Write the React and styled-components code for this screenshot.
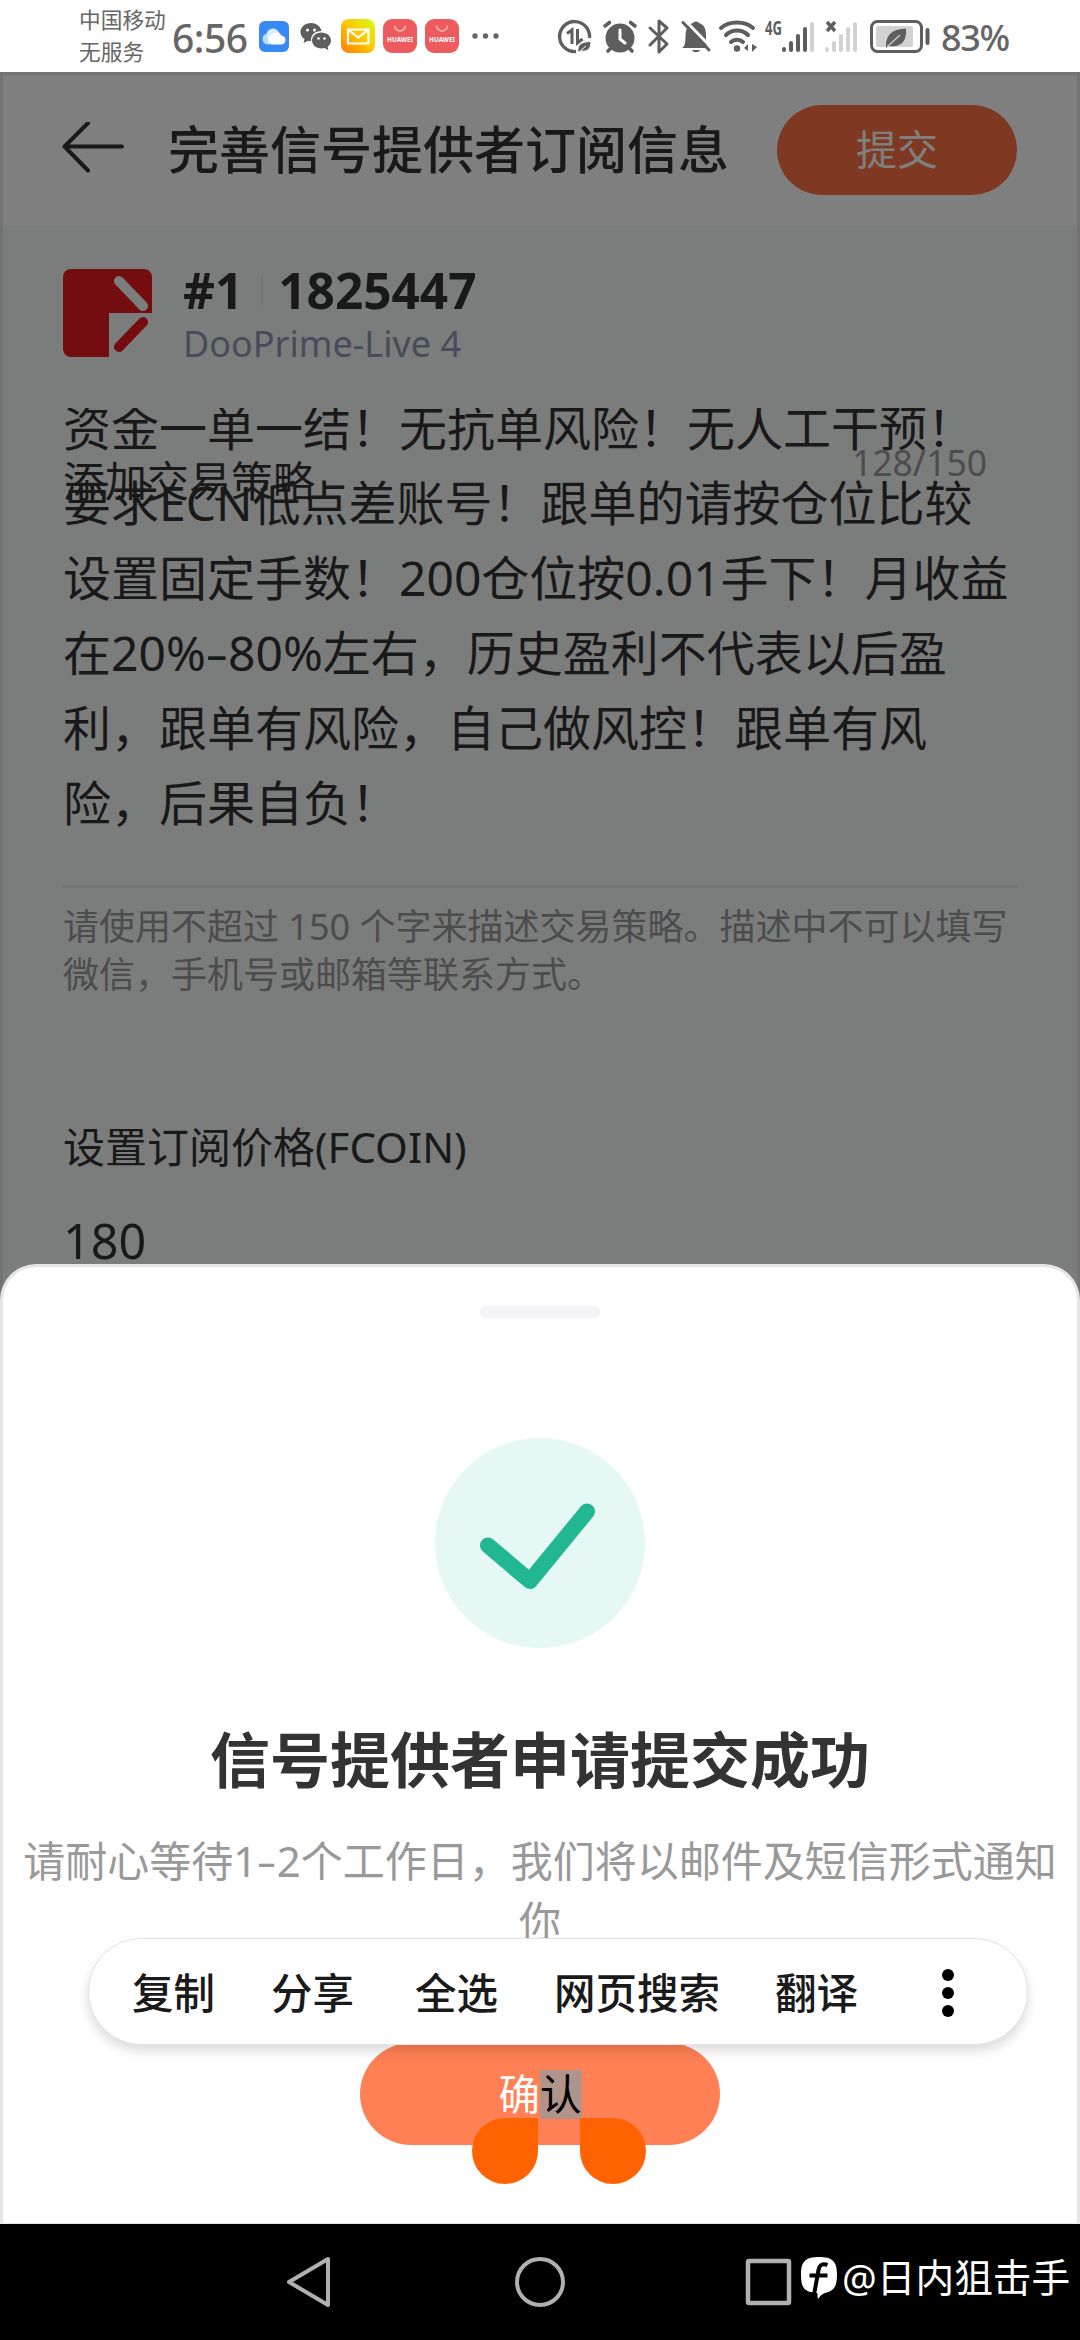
import React from 'react'
import styled, { createGlobalStyle } from 'styled-components'

const GlobalStyle = createGlobalStyle`
  * {
    box-sizing: border-box;
  }
  body {
    margin: 0;
    background: #fff;
    font-family: 'Noto Sans', 'Noto Sans CJK SC', sans-serif;
  }
  svg {
    display: block;
    flex: none;
  }
`

const Screen = styled.div`
  position: relative;
  width: 1080px;
  height: 2340px;
  overflow: hidden;
  display: flex;
  flex-direction: column;
`

const StatusBar = styled.div`
  height: 72px;
  padding-left: 79px;
  display: flex;
  align-items: center;
  color: #666;
  background: #fff;
`

const Carrier = styled.div`
  width: 93px;
  font-size: 21.7px;
  line-height: 32px;
  white-space: nowrap;
`

const Clock = styled.div`
  width: 87px;
  font-size: 39px;
  font-weight: 500;
  line-height: 44px;
  letter-spacing: -0.5px;
  padding-top: 4px;
`

const StatusIcon = styled.svg`
  width: ${props => props.$w}px;
  height: 36px;
  margin-right: ${props => props.$gap || 0}px;
  overflow: visible;
`

const Percent = styled.div`
  font-size: 36px;
  font-weight: 500;
  line-height: 44px;
  letter-spacing: -1.4px;
  padding-top: 3px;
`

const Page = styled.div`
  position: relative;
  height: 2152px;
  border: 3px solid #e6e6e6;
  background: #f7faf9;
`

const Header = styled.header`
  height: 150px;
  padding: 0 60px 0 58px;
  display: flex;
  align-items: center;
  background: #fff;
`

const Title = styled.h1`
  flex: 1;
  margin: -3px 0 0 43px;
  font-size: 51px;
  font-weight: 500;
  line-height: 60px;
  color: #333;
  white-space: nowrap;
`

const Submit = styled.button`
  width: 240px;
  height: 90px;
  padding: 0 0 3px;
  border: 0;
  border-radius: 45px;
  background: #ff7344;
  color: #fff;
  font-family: inherit;
  font-size: 41px;
  line-height: 60px;
`

const Form = styled.main`
  padding: 44px 60px 0;
  color: #333;
`

const Provider = styled.div`
  display: flex;
  height: 90px;
`

const ProviderText = styled.div`
  margin-left: 30px;
`

const Account = styled.div`
  display: flex;
  align-items: center;
  font-size: 49.5px;
  font-weight: 700;
  line-height: 42px;
`

const Separator = styled.span`
  width: 2px;
  height: 30px;
  margin: 0 15px 0 18px;
  background: #e6e9eb;
`

const Server = styled.div`
  margin-top: 12px;
  font-size: 36px;
  line-height: 42px;
  color: #8e98b4;
`

const Strategy = styled.div`
  position: relative;
  height: 480px;
  margin-top: 49px;
  border-bottom: 3px solid #e6e9e8;
`

const StrategyText = styled.div`
  height: 470px;
  overflow: hidden;
  font-size: 48px;
  line-height: 75px;
  white-space: nowrap;

  div:first-child {
    margin-top: -18px;
  }
`

const WideDash = styled.span`
  display: inline-block;
  margin: 0 0.07em;
  transform: scaleX(1.5);
`

/* sits on top of the textarea once it has scrolled */
const FloatingLabel = styled.div`
  position: absolute;
  left: 0;
  top: 49px;
  font-size: 42px;
  line-height: 48px;
`

const Counter = styled.div`
  position: absolute;
  right: 30px;
  top: 33px;
  font-size: 35.5px;
  line-height: 42px;
  color: #999;
`

const Hint = styled.div`
  margin-top: 15px;
  font-size: 36px;
  line-height: 48px;
  color: #999;
  white-space: nowrap;
`

const PriceLabel = styled.div`
  margin-top: 124px;
  font-size: 42px;
  line-height: 48px;
`

const Price = styled.div`
  margin-top: 39px;
  font-size: 48.5px;
  line-height: 60px;
`

const Scrim = styled.div`
  position: absolute;
  inset: -3px;
  background: rgba(0, 0, 0, 0.5);
`

const Sheet = styled.section`
  position: absolute;
  left: 0;
  top: 1264px;
  width: 1080px;
  height: 960px;
  border: 3px solid #e6e6e6;
  border-bottom-width: 1px;
  border-radius: 36px 36px 0 0;
  background: #fff;
  display: flex;
  flex-direction: column;
  align-items: center;
`

const Handle = styled.div`
  width: 120px;
  height: 12px;
  margin: 39px 0 120px;
  border-radius: 5px;
  background: #f3f4f8;
`

const SheetTitle = styled.h2`
  margin: 76px 0 0;
  font-size: 60px;
  font-weight: 700;
  line-height: 72px;
  color: #333;
`

const SheetText = styled.div`
  margin-top: 35px;
  font-size: 42px;
  line-height: 60px;
  color: #999;
  text-align: center;
  white-space: nowrap;
`

const Confirm = styled.button`
  position: relative;
  width: 360px;
  height: 102px;
  margin-top: 92px;
  padding: 0;
  border: 0;
  border-radius: 51px;
  background: #ff8055;
  color: #fff;
  font-family: inherit;
  font-size: 41.5px;
  line-height: 49px;
`

const Selected = styled.span`
  display: inline-block;
  background: #b0948c;
  color: #000;
`

const SelectHandle = styled.i`
  position: absolute;
  top: 75px;
  left: ${props => (props.$end ? 220 : 112)}px;
  width: 66px;
  height: 66px;
  border-radius: ${props => (props.$end ? '0 33px 33px 33px' : '33px 0 33px 33px')};
  background: #ff6200;
`

const ActionBar = styled.div`
  position: absolute;
  left: 88px;
  top: 1938px;
  width: 940px;
  height: 107px;
  padding: 2px 74px 0 43px;
  border: 1px solid #e4e4e4;
  border-radius: 54px;
  background: #fff;
  box-shadow: 0 6px 12px rgba(0, 0, 0, 0.14);
  display: flex;
  align-items: center;
`

const Action = styled.span`
  margin-right: ${props => props.$gap}px;
  font-size: 41.5px;
  font-weight: 500;
  line-height: 50px;
  color: #1a1a1a;
  white-space: nowrap;
`

const NavBar = styled.nav`
  height: 116px;
  padding-left: 284px;
  background: #000;
  display: flex;
  align-items: center;
`

const Watermark = styled.div`
  display: flex;
  align-items: center;
  height: 60px;
  margin: -10px 0 0 7px;
  font-size: 38.7px;
  line-height: 54px;
  color: #fff;
  white-space: nowrap;
`

const strategy = [
  '资金一单一结！无抗单风险！无人工干预！',
  '要求ECN低点差账号！跟单的请按仓位比较',
  '设置固定手数！200仓位按0.01手下！月收益',
  '在20%-80%左右，历史盈利不代表以后盈',
  '利，跟单有风险，自己做风控！跟单有风',
  '险，后果自负！',
]

const actions = [
  { text: '复制', gap: 56 },
  { text: '分享', gap: 61 },
  { text: '全选', gap: 56 },
  { text: '网页搜索', gap: 55 },
  { text: '翻译', gap: 83 },
]

function DashedText({ children }) {
  const [before, after] = children.split('-')
  if (after === undefined) return before
  return (
    <>
      {before}
      <WideDash>-</WideDash>
      {after}
    </>
  )
}

function HuaweiIcon({ gap }) {
  return (
    <StatusIcon $w={34} $gap={gap} viewBox="0 0 34 36">
      <rect y="1" width="34" height="34" rx="9" fill="#ee5b5e" />
      <path d="M11.500 7.500a5.500 5.500 0 0 0 11 0" fill="none" stroke="#ffb3ac" strokeWidth="1.500" />
      <text x="17" y="23.500" fontSize="6.300" fontWeight="700" fill="#fff" textAnchor="middle" textLength="26">
        HUAWEI
      </text>
    </StatusIcon>
  )
}

function Bars({ color, last }) {
  return (
    <g strokeWidth="4" strokeLinecap="round">
      {[3, 10, 17, 24, 31].map((x, i) => (
        <path key={x} d={`M${x - 1} 31V${[30, 24, 17, 10, 5][i]}`} stroke={i === 4 ? last : color} />
      ))}
    </g>
  )
}

function Status() {
  return (
    <StatusBar>
      <Carrier>
        <div>中国移动</div>
        <div>无服务</div>
      </Carrier>
      <Clock>6:56</Clock>
      <StatusIcon $w={30} $gap={11} viewBox="0 0 30 36">
        <rect y="3" width="30" height="31" rx="6" fill="#3789f5" />
        <circle cx="9" cy="21" r="5.500" fill="#b9dcff" />
        <circle cx="14" cy="17" r="6.500" fill="#d8ecff" />
        <path d="M12 26.500a5 5 0 0 1 0-9c3-4 9-4 10.500 0 6 1 5 9-.5 9z" fill="#fff" />
      </StatusIcon>
      <StatusIcon $w={32} $gap={9} viewBox="0 0 32 36" fill="#5e5e5e">
        <path d="M11 5C5 5 .5 9 .5 14c0 3 1.500 5.500 4 7l-1 4 4.500-2.200 3 .5C10.500 17 15 13 21.500 13 20.500 8 16 5 11 5z" />
        <path d="M21.500 14.500c-5.300 0-9.500 3.600-9.500 8s4.200 8 9.500 8l3-.4 4 2.200-.9-3.600c2.200-1.500 3.400-3.700 3.400-6.200 0-4.400-4.200-8-9.500-8z" />
        <g fill="#fff">
          <circle cx="7.500" cy="12" r="1.500" />
          <circle cx="14.500" cy="12" r="1.500" />
          <circle cx="18.500" cy="20.500" r="1.300" />
          <circle cx="24.500" cy="20.500" r="1.300" />
        </g>
      </StatusIcon>
      <StatusIcon $w={34} $gap={8} viewBox="0 0 34 36">
        <defs>
          <linearGradient id="mail" x1="0" y1="1" x2="1" y2="0">
            <stop offset="0" stopColor="#ff7a00" />
            <stop offset="0.500" stopColor="#ffc400" />
            <stop offset="1" stopColor="#d4ff10" />
          </linearGradient>
        </defs>
        <rect y="1" width="34" height="34" rx="8" fill="url(#mail)" />
        <path d="M7 11.500h20.500v14H7zM7 11.500l10.200 8 10.300-8" fill="none" stroke="#fff" strokeWidth="2.200" />
      </StatusIcon>
      <HuaweiIcon gap={8} />
      <HuaweiIcon gap={12} />
      <StatusIcon $w={30} $gap={57} viewBox="0 0 30 36" fill="#666">
        <circle cx="4" cy="18" r="2.700" />
        <circle cx="14.500" cy="18" r="2.700" />
        <circle cx="25" cy="18" r="2.700" />
      </StatusIcon>
      <StatusIcon $w={34} $gap={11} viewBox="0 0 34 36" fill="none" stroke="#5e5e5e">
        <path d="M18 33.500A15 15 0 1 1 31.500 20" strokeWidth="3.400" />
        <path d="M9 15.500l5-3.500v14M19.500 11v14l5-4" strokeWidth="3" />
        <path d="M20 34c-1-8 4-10.500 13-10.500 0 7-3 10.500-10 9.500M20 35l8-7" fill="#5e5e5e" stroke="#fff" strokeWidth="1" />
      </StatusIcon>
      <StatusIcon $w={34} $gap={11} viewBox="0 0 34 36" fill="none" stroke="#5e5e5e" strokeLinecap="round">
        <circle cx="17" cy="20" r="14.500" fill="#5e5e5e" stroke="none" />
        <path d="M2 8l4.500-3.500M32 8l-4.500-3.500M5 33l2-2M29 33l-2-2" strokeWidth="3.600" />
        <path d="M17 12v9l5 4" stroke="#fff" strokeWidth="3" />
      </StatusIcon>
      <StatusIcon $w={22} $gap={11} viewBox="0 0 22 36" fill="none" stroke="#5e5e5e" strokeWidth="3" strokeLinejoin="round" strokeLinecap="round">
        <path d="M2 10l17 16-8 8V3l8 7L2 27" />
      </StatusIcon>
      <StatusIcon $w={30} $gap={8} viewBox="0 0 30 36" fill="#5e5e5e">
        <path d="M1 30c3-2 3.500-5 3.500-12C5 9 8 6 12 5c1-2 5-2 6 0 5 1.500 7 6 7 12 0 7 .5 10 2 13z" />
        <path d="M11 32h8c-1 3-7 3-8 0z" />
        <path d="M4.500 3L31 30" stroke="#fff" strokeWidth="3" />
        <path d="M2 4.500L28 32" stroke="#5e5e5e" strokeWidth="3" strokeLinecap="round" />
      </StatusIcon>
      <StatusIcon $w={38} $gap={8} viewBox="0 0 38 36" fill="none" stroke="#5e5e5e" strokeWidth="4" strokeLinecap="round">
        <path d="M2 10C10 2.500 26 2.500 34 10M7 17c6-6 16-6 22 0M12 24c3-3 9-3 12 0" />
        <circle cx="18" cy="30.500" r="3.200" fill="#5e5e5e" stroke="none" />
        <path d="M25 30l4-4v7zM38 29l-5 5v-8z" fill="#5e5e5e" stroke="none" />
      </StatusIcon>
      <StatusIcon $w={50} $gap={10} viewBox="0 0 50 36">
        <text x="0" y="17" fontSize="19" fontWeight="700" fill="#5e5e5e" textLength="17" lengthAdjust="spacingAndGlyphs">
          4G
        </text>
        <g transform="translate(17 1)">
          <Bars color="#5e5e5e" last="#d2d2d2" />
        </g>
      </StatusIcon>
      <StatusIcon $w={34} $gap={11} viewBox="0 0 34 36" fill="none">
        <g transform="translate(0 1)">
          <Bars color="#d2d2d2" last="#d2d2d2" />
        </g>
        <path d="M2 4l8 9M10 4l-8 9" stroke="#5e5e5e" strokeWidth="3.400" />
      </StatusIcon>
      <StatusIcon $w={60} $gap={11} viewBox="0 0 60 36" fill="none">
        <rect x="1.500" y="3.500" width="50" height="30" rx="6" stroke="#5e5e5e" strokeWidth="3" />
        <rect x="6" y="8" width="37" height="21" rx="2" fill="#d2d2d2" />
        <path d="M16 28c0-12 7-17 20-17.500 1 12-4 19-17 17.500l-3 2z" fill="#5e5e5e" />
        <path d="M17 29l13-12" stroke="#d2d2d2" strokeWidth="1.200" />
        <path d="M57.500 12v13" stroke="#5e5e5e" strokeWidth="4" strokeLinecap="round" />
      </StatusIcon>
      <Percent>83%</Percent>
    </StatusBar>
  )
}

function App() {
  return (
    <Screen>
      <GlobalStyle />
      <Status />
      <Page>
        <Header>
          <svg width="64" height="56" viewBox="0 0 64 56" fill="none" stroke="#333" strokeWidth="4" strokeLinecap="round" strokeLinejoin="round">
            <path d="M27 1L3.500 24.500 27 48.500M4 24.500h57" />
          </svg>
          <Title>完善信号提供者订阅信息</Title>
          <Submit>提交</Submit>
        </Header>
        <Form>
          <Provider>
            <svg width="90" height="90" viewBox="0 0 90 90">
              <path d="M8 0h73a8 8 0 0 1 8 8v36H46v44H8a8 8 0 0 1-8-8V8a8 8 0 0 1 8-8z" fill="#e61a1e" />
              <path d="M56 12l24 25" stroke="#f7faf9" strokeWidth="10" strokeLinecap="round" />
              <path d="M56 78l24-25" stroke="#e61a1e" strokeWidth="10" strokeLinecap="round" />
            </svg>
            <ProviderText>
              <Account>
                #1
                <Separator />
                1825447
              </Account>
              <Server>DooPrime-Live 4</Server>
            </ProviderText>
          </Provider>
          <Strategy>
            <StrategyText>
              {strategy.map(line => (
                <div key={line}>
                  <DashedText>{line}</DashedText>
                </div>
              ))}
            </StrategyText>
            <FloatingLabel>添加交易策略</FloatingLabel>
            <Counter>128/150</Counter>
          </Strategy>
          <Hint>
            <div>请使用不超过 150 个字来描述交易策略。描述中不可以填写</div>
            <div>微信，手机号或邮箱等联系方式。</div>
          </Hint>
          <PriceLabel>设置订阅价格(FCOIN)</PriceLabel>
          <Price>180</Price>
        </Form>
        <Scrim />
      </Page>
      <Sheet>
        <Handle />
        <svg width="210" height="210" viewBox="0 0 210 210">
          <circle cx="105" cy="105" r="105" fill="#e6f8f4" />
          <path d="M53 107.500l42 35.500 57-69.500" fill="none" stroke="#21b793" strokeWidth="16" strokeLinecap="round" strokeLinejoin="round" />
        </svg>
        <SheetTitle>信号提供者申请提交成功</SheetTitle>
        <SheetText>
          <div>
            <DashedText>请耐心等待1-2个工作日，我们将以邮件及短信形式通知</DashedText>
          </div>
          <div>你</div>
        </SheetText>
        <Confirm>
          确<Selected>认</Selected>
          <SelectHandle />
          <SelectHandle $end />
        </Confirm>
      </Sheet>
      <ActionBar>
        {actions.map(action => (
          <Action key={action.text} $gap={action.gap}>
            {action.text}
          </Action>
        ))}
        <svg width="14" height="50" viewBox="0 0 14 50">
          <circle cx="7" cy="7" r="6" />
          <circle cx="7" cy="25" r="6" />
          <circle cx="7" cy="43" r="6" />
        </svg>
      </ActionBar>
      <NavBar>
        <svg width="509" height="60" viewBox="0 0 509 60" fill="none" stroke="#b0b0b0" strokeWidth="4" strokeLinejoin="round">
          <path d="M44 7v46L5 30z" />
          <circle cx="256" cy="30" r="23" />
          <rect x="464" y="9" width="41" height="42" rx="1" strokeWidth="4.500" />
        </svg>
        <Watermark>
          <svg width="42" height="50" viewBox="0 0 42 50">
            <path d="M19 5c13 0 18 4 18 17 0 14-4 17-12 19-3 1-5 3-7 6-1-3 0-5-1-6C4 40 1 36 1 22 1 9 6 5 19 5z" fill="#fff" />
            <path d="M27.500 13c-5-2-8 0-9 5l-4 22-2 7M9.500 23.500h18" fill="none" stroke="#000" strokeWidth="4" />
          </svg>
          @日内狙击手
        </Watermark>
      </NavBar>
    </Screen>
  )
}

export default App
